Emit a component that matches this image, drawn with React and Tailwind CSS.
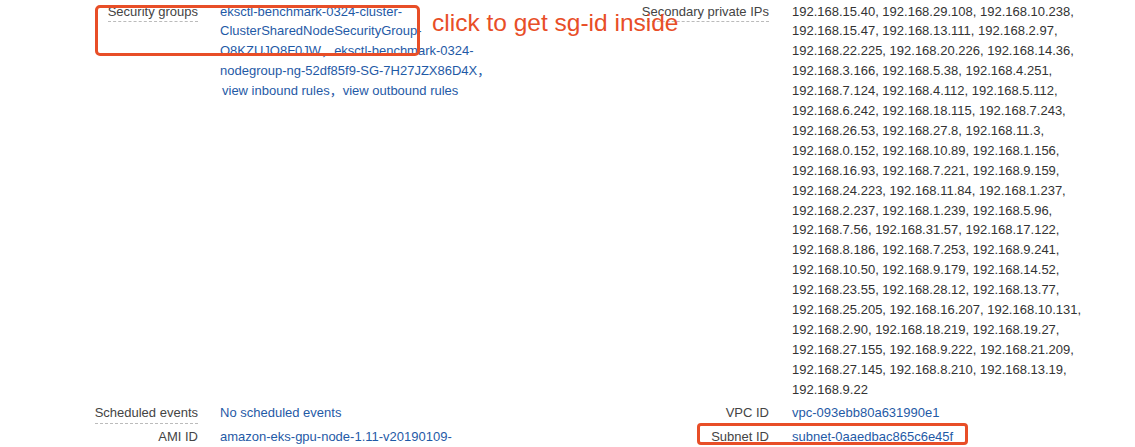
const IPS = [
  "192.168.15.40", "192.168.29.108", "192.168.10.238",
  "192.168.15.47", "192.168.13.111", "192.168.2.97",
  "192.168.22.225", "192.168.20.226", "192.168.14.36",
  "192.168.3.166", "192.168.5.38", "192.168.4.251",
  "192.168.7.124", "192.168.4.112", "192.168.5.112",
  "192.168.6.242", "192.168.18.115", "192.168.7.243",
  "192.168.26.53", "192.168.27.8", "192.168.11.3",
  "192.168.0.152", "192.168.10.89", "192.168.1.156",
  "192.168.16.93", "192.168.7.221", "192.168.9.159",
  "192.168.24.223", "192.168.11.84", "192.168.1.237",
  "192.168.2.237", "192.168.1.239", "192.168.5.96",
  "192.168.7.56", "192.168.31.57", "192.168.17.122",
  "192.168.8.186", "192.168.7.253", "192.168.9.241",
  "192.168.10.50", "192.168.9.179", "192.168.14.52",
  "192.168.23.55", "192.168.28.12", "192.168.13.77",
  "192.168.25.205", "192.168.16.207", "192.168.10.131",
  "192.168.2.90", "192.168.18.219", "192.168.19.27",
  "192.168.27.155", "192.168.9.222", "192.168.21.209",
  "192.168.27.145", "192.168.8.210", "192.168.13.19",
  "192.168.9.22",
];

const ROW = "grid grid-cols-[220px_280px_292px_343px] items-start py-[1.5px]";

function Label({ children, dashed, right }) {
  return (
    <div className={`text-right text-[#444] ${right ? "pr-[23px]" : "pr-[22px]"}`}>
      <span className={dashed ? "inline-block border-b border-dashed border-[#bbb]" : ""}>
        {children}
      </span>
    </div>
  );
}

function Link({ children }) {
  return <a className="text-[#1f5aa6] cursor-pointer">{children}</a>;
}

export default function App() {
  return (
    <div className="relative w-[1135px] h-[447px] overflow-hidden bg-white font-['Liberation_Sans','Noto_Sans_CJK_SC',sans-serif] text-[13px] leading-[19.9px] text-[#333]">
      {/* security groups / secondary IPs */}
      <div className={ROW}>
        <Label dashed>Security groups</Label>
        <div className="text-[#1f5aa6]">
          <div>
            <Link>eksctl-benchmark-0324-cluster-ClusterSharedNodeSecurityGroup-O8KZUJO8F0JW</Link>
            ，
            <Link>eksctl-benchmark-0324-nodegroup-ng-52df85f9-SG-7H27JZX86D4X</Link>
            ，
          </div>
          <div className="pl-[2px]">
            <Link>view inbound rules</Link>，<Link>view outbound rules</Link>
          </div>
        </div>
        <Label dashed right>Secondary private IPs</Label>
        <div className="w-[310px]">{IPS.join(", ")}</div>
      </div>

      <div className={ROW}>
        <Label dashed>Scheduled events</Label>
        <div><Link>No scheduled events</Link></div>
        <Label right>VPC ID</Label>
        <div><Link>vpc-093ebb80a631990e1</Link></div>
      </div>

      <div className={ROW}>
        <Label>AMI ID</Label>
        <div>
          <Link>
            amazon-eks-gpu-node-1.11-v20190109-
            <br />
            (ami-0c13bb9cbfd007e56)
          </Link>
        </div>
        <Label right>Subnet ID</Label>
        <div><Link>subnet-0aaedbac865c6e45f</Link></div>
      </div>

      {/* annotations */}
      <div className="absolute left-[95px] top-[5px] w-[325px] h-[51px] rounded-[5px] border-[3px] border-[#e84e27]" />
      <div className="absolute left-[432px] top-[11px] text-[24.5px] leading-none text-[#e84e27] whitespace-nowrap">
        click to get sg-id inside
      </div>
      <div className="absolute left-[697px] top-[423px] w-[271px] h-[22px] rounded-[4px] border-[3px] border-[#e84e27]" />
    </div>
  );
}
